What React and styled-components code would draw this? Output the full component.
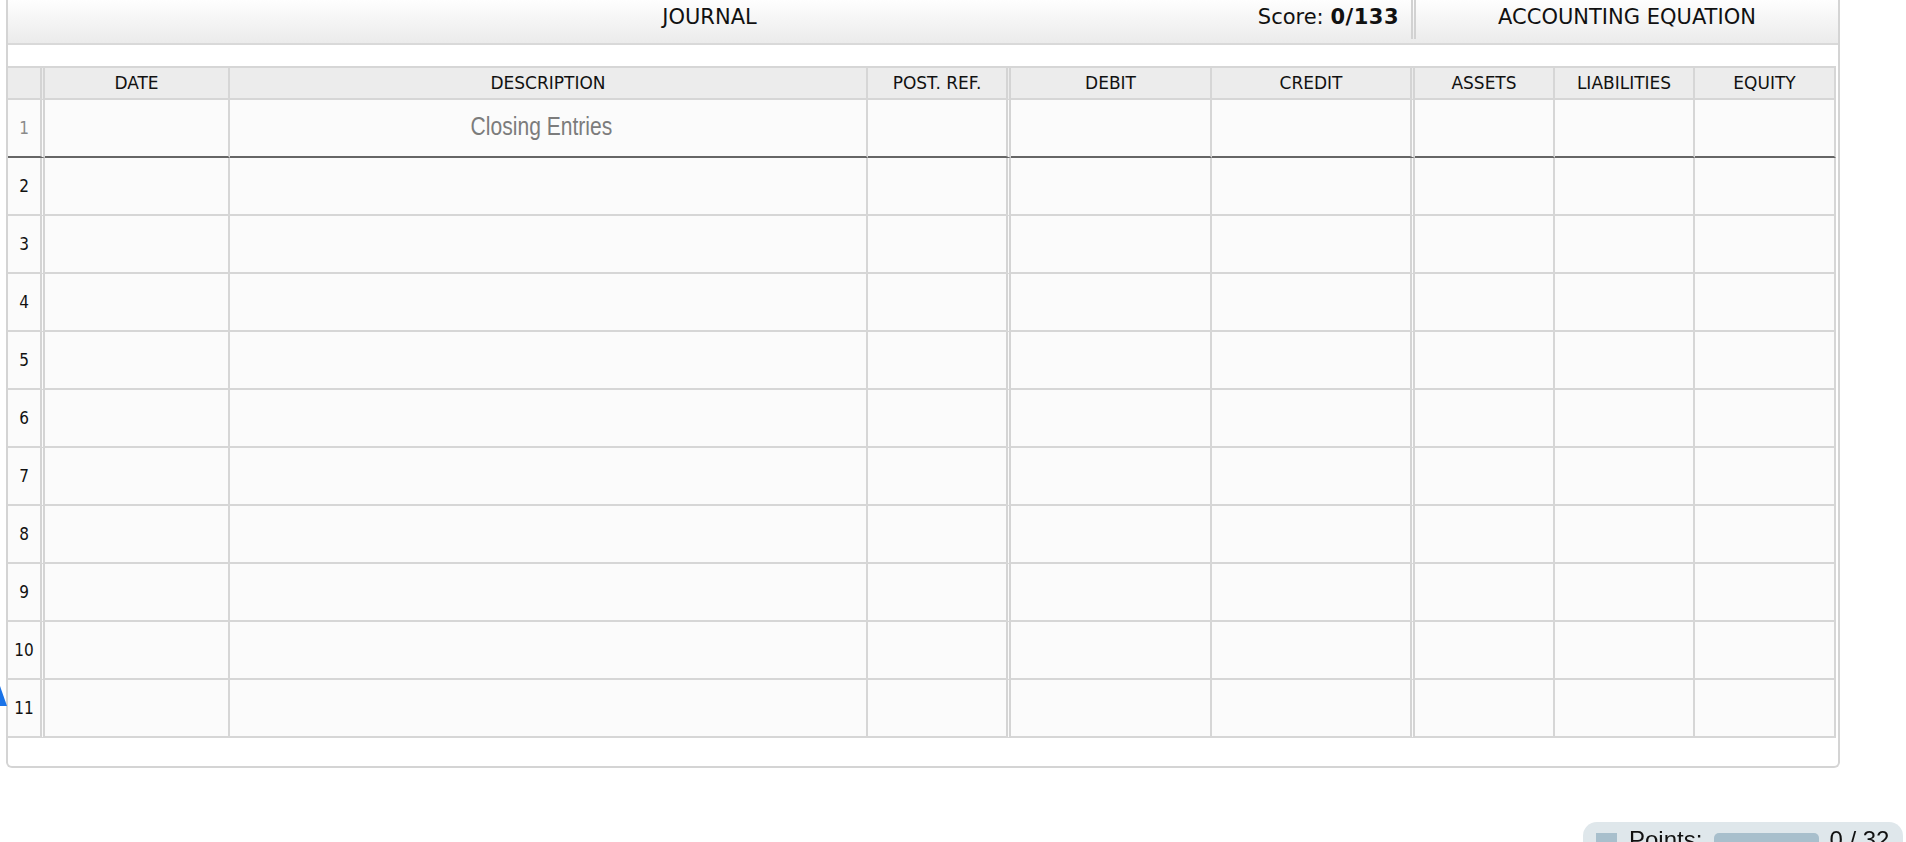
import React from 'react';
import styled, { createGlobalStyle } from 'styled-components';

const GlobalStyle = createGlobalStyle`
  html, body {
    margin: 0;
    padding: 0;
    background: #ffffff;
    overflow: hidden;
  }
`;

const Page = styled.div`
  padding-left: 6px;
  font-family: 'DejaVu Sans', Verdana, sans-serif;
  color: #111;
`;

const Panel = styled.section`
  box-sizing: border-box;
  width: 1834px;
  border: 2px solid #d4d4d4;
  border-top: 0;
  border-radius: 0 0 6px 6px;
  padding-bottom: 28px;
  background: #fff;
`;

const TitleBar = styled.header`
  display: flex;
  height: 43px;
  border-bottom: 2px solid #d9d9d9;
  background: linear-gradient(#fefefe, #ebebeb);
  font-size: 21px;
  line-height: 24px;
`;

const JournalTitle = styled.div`
  display: grid;
  grid-template-columns: 1fr auto 1fr;
  align-items: start;
  width: 1403px;
  padding-top: 5px;
  box-sizing: border-box;
`;

const Title = styled.div`
  grid-column: 2;
  text-align: center;
`;

const Score = styled.div`
  grid-column: 3;
  justify-self: end;
  padding-right: 12px;

  b {
    font-weight: bold;
    letter-spacing: 0.5px;
  }
`;

const TitleDivider = styled.div`
  width: 0;
  height: 39px;
  border-left: 5px double #d2d2d2;
`;

const EquationTitle = styled.div`
  flex: 1;
  padding-top: 5px;
  text-align: center;
`;

const Table = styled.div`
  width: 1828px;
  margin-top: 21px;
  border-top: 2px solid #d6d6d6;
`;

const columns = '37px 185px 638px 143px 201px 203px 140px 140px 141px';

const Row = styled.div`
  display: grid;
  grid-template-columns: ${columns};
  height: ${p => (p.$head ? 32 : 58)}px;
`;

const Cell = styled.div`
  box-sizing: border-box;
  display: flex;
  align-items: center;
  justify-content: center;
  min-width: 0;
  background: ${p => (p.$head ? '#ececec' : '#fbfbfb')};
  border-right: ${p => (p.$double ? '5px double #d4d4d4' : '2px solid #d6d6d6')};
  border-bottom: 2px solid ${p => (p.$dark ? '#666666' : '#d6d6d6')};
  font-size: 17px;
`;

const LineNo = styled.span`
  font-family: 'DejaVu Sans Condensed', 'DejaVu Sans', sans-serif;
  font-size: 17px;
  color: ${p => (p.$muted ? '#8a8a8a' : '#111')};
`;

const Placeholder = styled.span`
  display: inline-block;
  font-family: 'Liberation Sans', Arial, sans-serif;
  font-size: 26px;
  color: #7c7c7c;
  margin-right: 14px;
  margin-bottom: 4px;
  transform: scaleX(0.81);
`;

const EdgeMarker = styled.svg`
  position: fixed;
  left: 0;
  top: 686px;
`;

const PointsBadge = styled.div`
  position: fixed;
  top: 822px;
  left: 1583px;
  width: 320px;
  box-sizing: border-box;
  display: flex;
  align-items: flex-start;
  padding: 4px 12px 8px 13px;
  border-radius: 14px;
  background: #dfe7eb;
  font-family: 'Liberation Sans', Arial, sans-serif;
  font-size: 24px;
  line-height: 28px;
  color: #111;
`;

const BadgeIcon = styled.svg`
  margin-top: 7px;
  margin-right: 12px;
  flex: none;
`;

const Meter = styled.div`
  width: 105px;
  height: 20px;
  margin: 7px 10px 0 12px;
  border-radius: 5px;
  background: #a8bfcc;
`;

const headers = [
  { label: '', double: true },
  { label: 'DATE' },
  { label: 'DESCRIPTION' },
  { label: 'POST. REF.', double: true },
  { label: 'DEBIT' },
  { label: 'CREDIT', double: true },
  { label: 'ASSETS' },
  { label: 'LIABILITIES' },
  { label: 'EQUITY' },
];

const rows = Array.from({ length: 11 }, (_, i) => i + 1);

const App = () => (
  <Page>
    <GlobalStyle />
    <Panel>
      <TitleBar>
        <JournalTitle>
          <Title>JOURNAL</Title>
          <Score>
            Score: <b>0/133</b>
          </Score>
        </JournalTitle>
        <TitleDivider />
        <EquationTitle>ACCOUNTING EQUATION</EquationTitle>
      </TitleBar>

      <Table>
        <Row $head>
          {headers.map((h, i) => (
            <Cell key={i} $head $double={h.double}>
              {h.label}
            </Cell>
          ))}
        </Row>
        {rows.map(n => (
          <Row key={n}>
            {headers.map((h, i) => (
              <Cell key={i} $double={h.double} $dark={n === 1}>
                {i === 0 && <LineNo $muted={n === 1}>{n}</LineNo>}
                {i === 2 && n === 1 && <Placeholder>Closing Entries</Placeholder>}
              </Cell>
            ))}
          </Row>
        ))}
      </Table>
    </Panel>

    <EdgeMarker width="8" height="22" viewBox="0 0 8 22">
      <polygon points="0,0 7,20 0,20" fill="#1a73e8" />
    </EdgeMarker>

    <PointsBadge>
      <BadgeIcon width="21" height="21" viewBox="0 0 21 21">
        <rect width="21" height="21" fill="#a8bfcc" />
        <polygon points="21,9 21,21 9,21" fill="#dfe7eb" opacity="0.6" />
      </BadgeIcon>
      <span>Points:</span>
      <Meter />
      <span>0 / 32</span>
    </PointsBadge>
  </Page>
);

export default App;
